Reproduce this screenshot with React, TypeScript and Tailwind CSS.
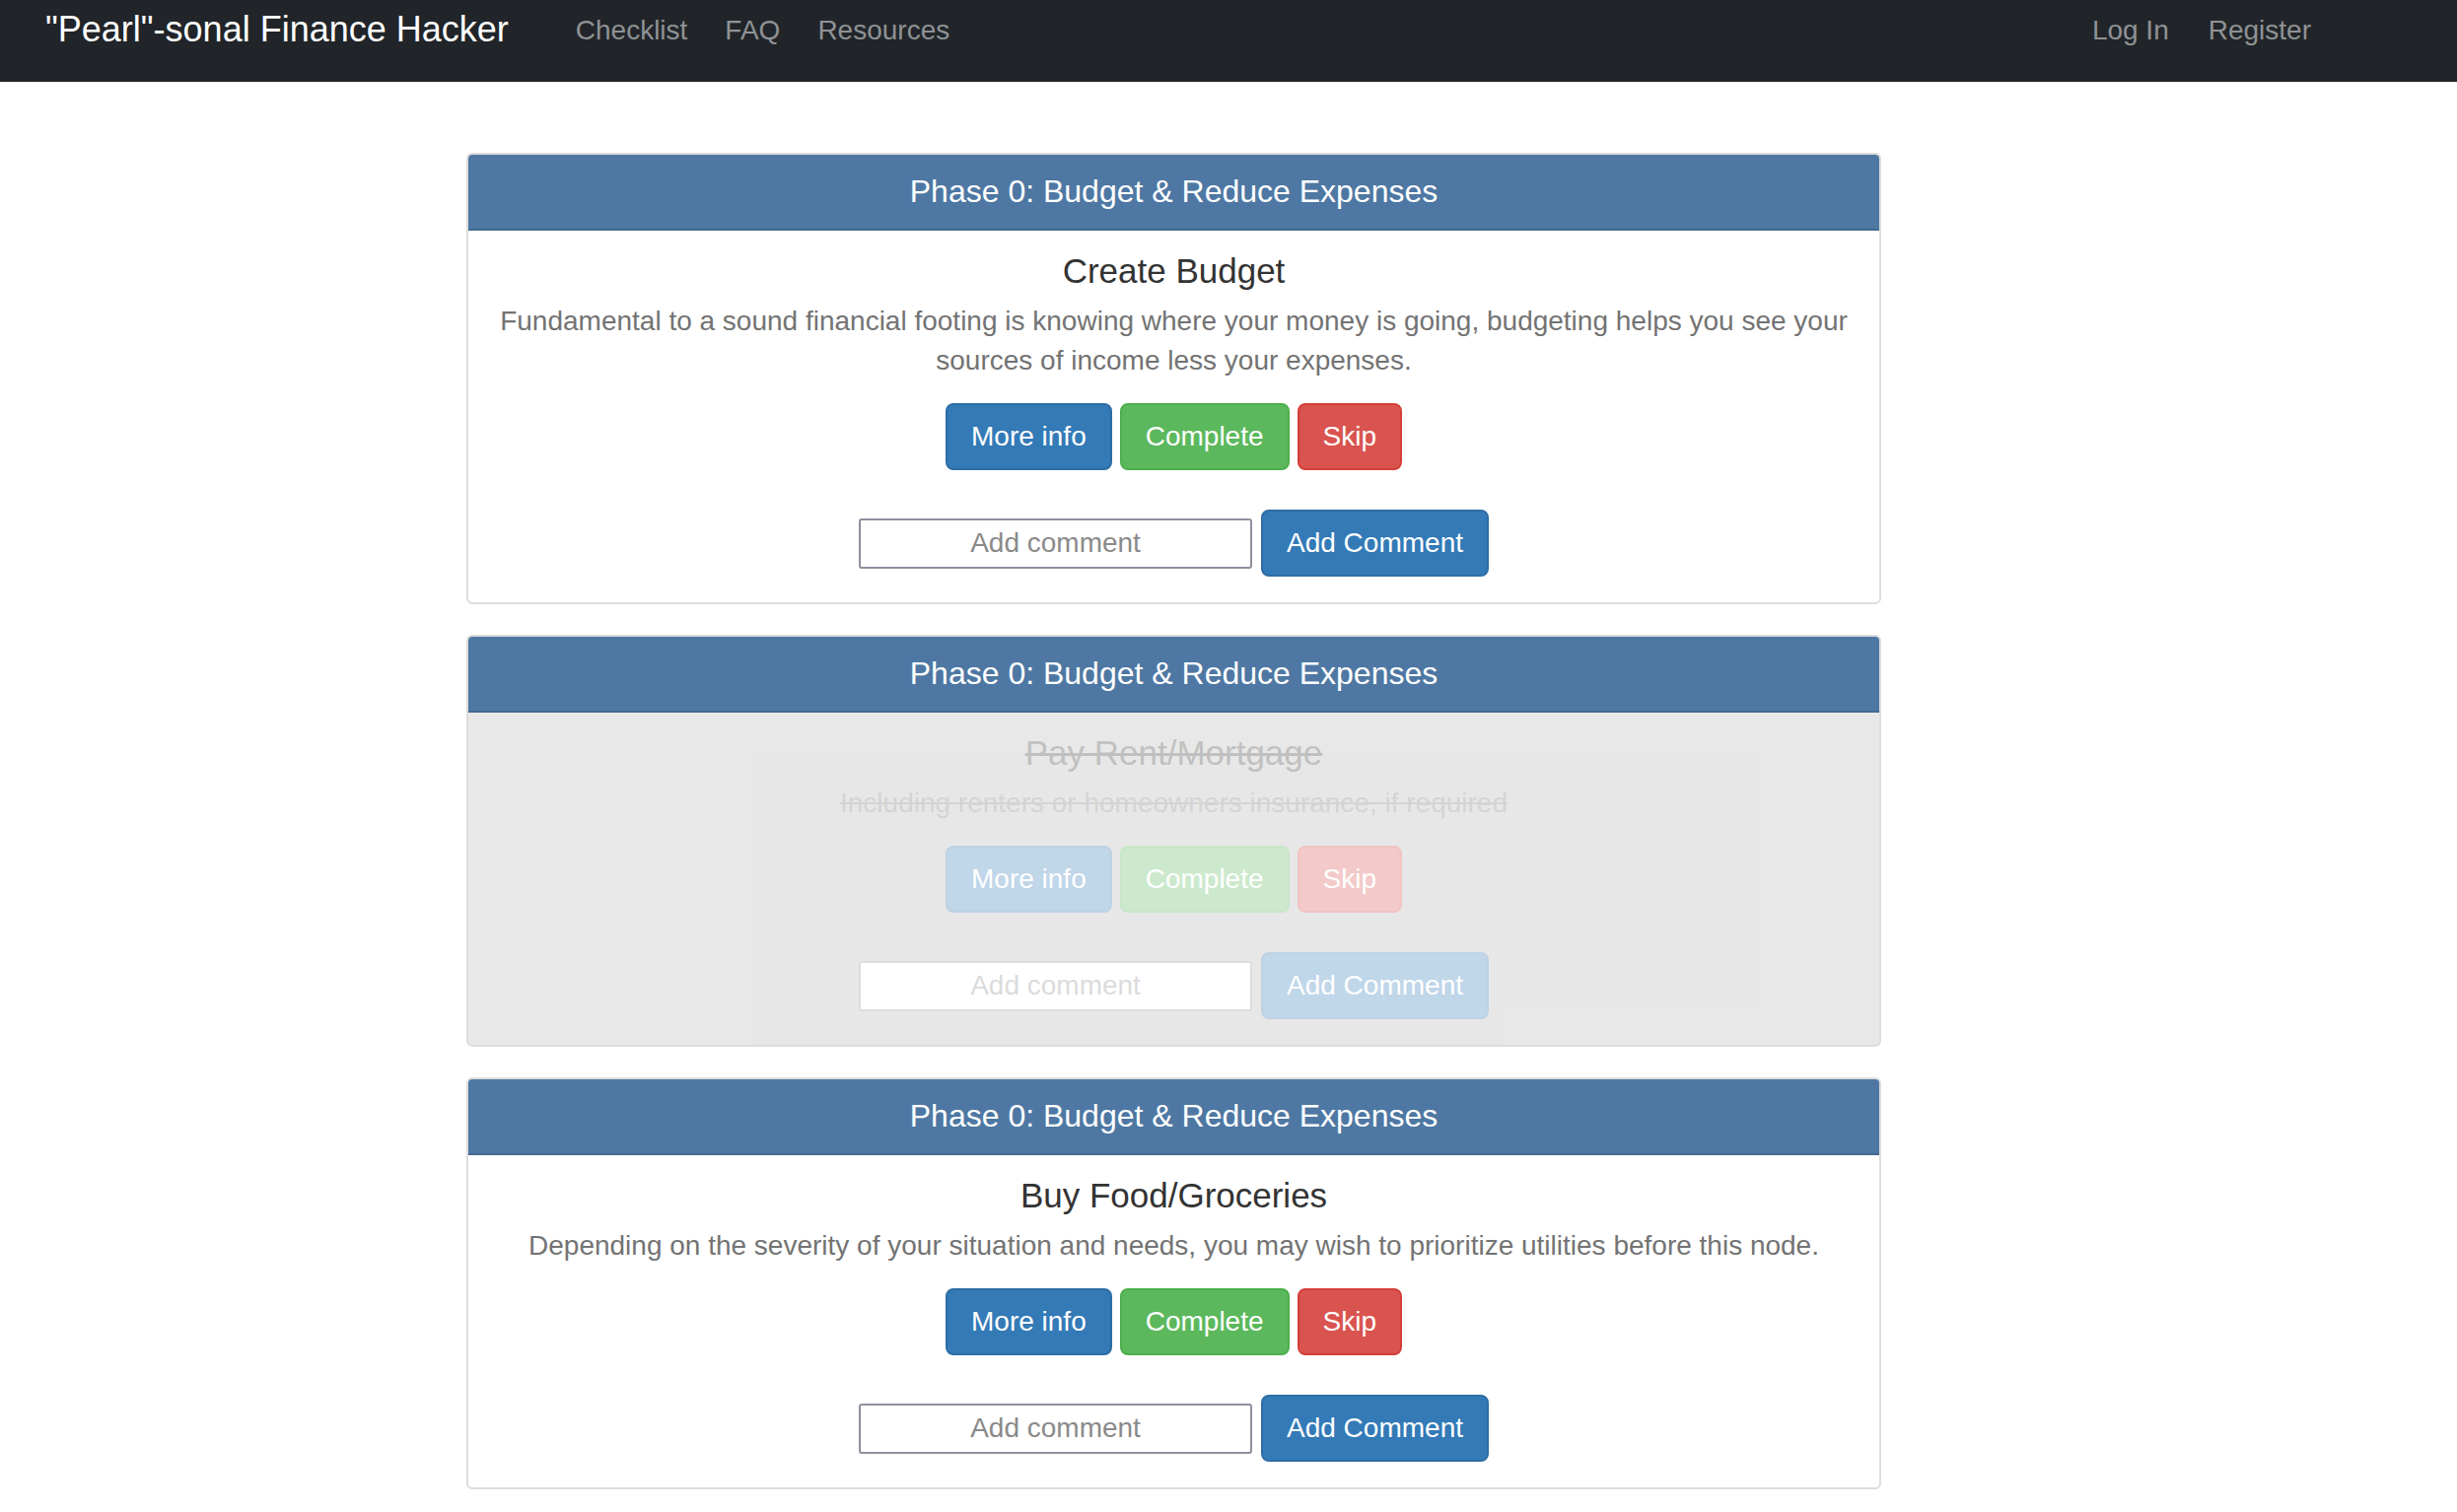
import React from 'react';

type Step = {
  title: string;
  description: string;
  done?: boolean;
};

const PHASE = 'Phase 0: Budget & Reduce Expenses';

const steps: Step[] = [
  {
    title: 'Create Budget',
    description:
      'Fundamental to a sound financial footing is knowing where your money is going, budgeting helps you see your sources of income less your expenses.',
  },
  {
    title: 'Pay Rent/Mortgage',
    description: 'Including renters or homeowners insurance, if required',
    done: true,
  },
  {
    title: 'Buy Food/Groceries',
    description:
      'Depending on the severity of your situation and needs, you may wish to prioritize utilities before this node.',
  },
];

const btn =
  'h-[68px] px-[24px] flex items-center border-2 rounded-[8px] text-white text-[28px] leading-none';

function StepCard({ step }: { step: Step }) {
  return (
    <div className="border-2 border-[#dddddd] rounded-[6px] overflow-hidden bg-white">
      {/* panel heading */}
      <div className="h-[77px] bg-[#4e78a3] border-b-2 border-[#43698f] text-white text-[32px] leading-[75px] text-center">
        {PHASE}
      </div>

      {/* body is faded out once a step is done */}
      <div
        className={
          'px-[22px] pt-[21px] pb-[26px] flex flex-col items-center ' +
          (step.done ? 'bg-[#b2b2b2] opacity-30' : '')
        }
      >
        <h4
          className={
            'text-[35px] leading-[40px] text-[#333333] ' + (step.done ? 'line-through' : '')
          }
        >
          {step.title}
        </h4>
        <p
          className={
            'mt-[11px] text-[28px] leading-[40px] text-[#737373] text-center ' +
            (step.done ? 'line-through' : '')
          }
        >
          {step.description}
        </p>

        <div className="mt-[23px] flex gap-[8px]">
          <button className={btn + ' bg-[#337ab7] border-[#2e6da4]'}>More info</button>
          <button className={btn + ' bg-[#5cb85c] border-[#4cae4c]'}>Complete</button>
          <button className={btn + ' bg-[#d9534f] border-[#d43f3a]'}>Skip</button>
        </div>

        <div className="mt-[40px] flex items-center gap-[9px]">
          <input
            placeholder="Add comment"
            className="w-[399px] h-[51px] bg-white border-2 border-[#8f8f9d] rounded-[3px] text-center text-[28px] placeholder:text-[#8a8a8a] outline-none"
          />
          <button className={btn + ' bg-[#337ab7] border-[#2e6da4] h-[67px]'}>Add Comment</button>
        </div>
      </div>
    </div>
  );
}

export default function App() {
  return (
    <div className="min-h-screen bg-white font-['Liberation_Sans',Arial,sans-serif]">
      <nav className="h-[83px] bg-[#212529] flex items-start pt-[10px] pl-[46px] pr-[148px]">
        <a className="text-white text-[36px] leading-[40px]">"Pearl"-sonal Finance Hacker</a>
        <div className="ml-[68px] flex gap-[38px] text-[28px] leading-[42px] text-[#8f9295]">
          <a>Checklist</a>
          <a>FAQ</a>
          <a>Resources</a>
        </div>
        <div className="ml-auto flex gap-[40px] text-[28px] leading-[42px] text-[#8f9295]">
          <a>Log In</a>
          <a>Register</a>
        </div>
      </nav>

      <main className="pt-[72px] pb-[23px] pl-[473px]">
        <div className="w-[1435px] flex flex-col gap-[31px]">
          {steps.map((s) => (
            <StepCard key={s.title} step={s} />
          ))}
        </div>
      </main>
    </div>
  );
}
